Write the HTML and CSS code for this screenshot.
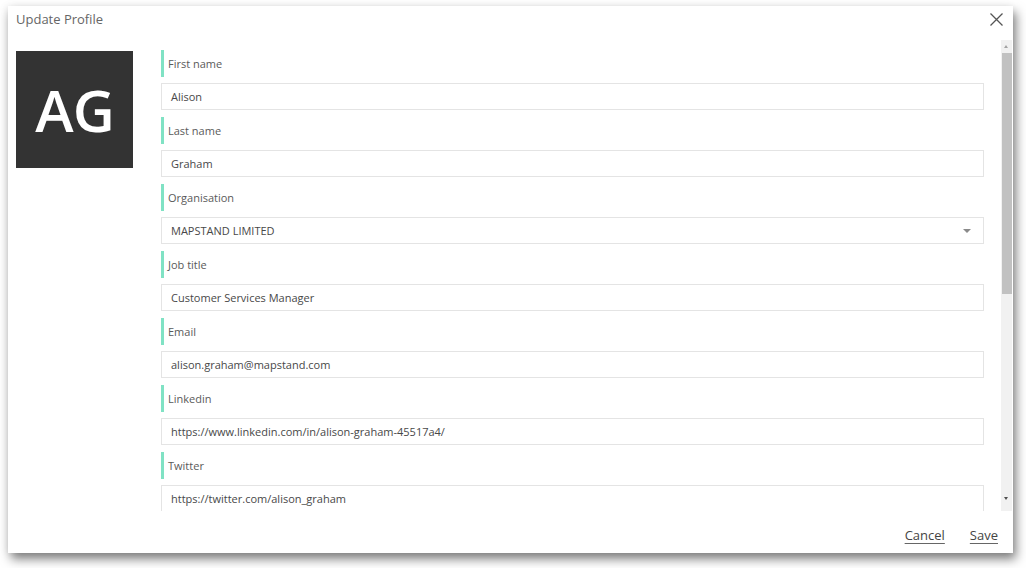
FILE: index.html
```html
<!DOCTYPE html>
<html lang="en">
<head>
<meta charset="utf-8">
<title>Update Profile</title>
<link rel="stylesheet" href="styles.css">
</head>
<body>
<div class="dialog">
  <header class="dialog-header">
    <h1 class="dialog-title">Update Profile</h1>
    <button class="close-btn" aria-label="Close">
      <svg width="13" height="13" viewBox="0 0 13 13"><path d="M0.5 0.5 L12.5 12.5 M12.5 0.5 L0.5 12.5" stroke="#555" stroke-width="1.3" fill="none"/></svg>
    </button>
  </header>
  <div class="dialog-body">
    <div class="scroll-content">
      <div class="avatar">AG</div>
      <form class="form">
        <div class="field">
          <label class="field-label">First name</label>
          <div class="field-input">Alison</div>
        </div>
        <div class="field">
          <label class="field-label">Last name</label>
          <div class="field-input">Graham</div>
        </div>
        <div class="field">
          <label class="field-label">Organisation</label>
          <div class="field-input select">MAPSTAND LIMITED<span class="caret"></span></div>
        </div>
        <div class="field">
          <label class="field-label">Job title</label>
          <div class="field-input">Customer Services Manager</div>
        </div>
        <div class="field">
          <label class="field-label">Email</label>
          <div class="field-input">alison.graham@mapstand.com</div>
        </div>
        <div class="field">
          <label class="field-label">Linkedin</label>
          <div class="field-input">https://www.linkedin.com/in/alison-graham-45517a4/</div>
        </div>
        <div class="field">
          <label class="field-label">Twitter</label>
          <div class="field-input">https://twitter.com/alison_graham</div>
        </div>
      </form>
    </div>
    <div class="scrollbar">
      <span class="sb-arrow up"></span>
      <div class="sb-track"><div class="sb-thumb"></div></div>
      <span class="sb-arrow down"></span>
    </div>
  </div>
  <footer class="dialog-footer">
    <a class="footer-link">Cancel</a>
    <a class="footer-link">Save</a>
  </footer>
</div>
</body>
</html>
```
FILE: styles.css
```css
* { box-sizing: border-box; }
html, body {
  margin: 0;
  padding: 0;
  background: #ffffff;
  font-family: "Open Sans", "Noto Sans", "DejaVu Sans", sans-serif;
}
body {
  width: 1026px;
  height: 568px;
  overflow: hidden;
  padding: 6px 0 0 8px;
}
.dialog {
  width: 1005px;
  height: 547px;
  background: #fff;
  display: flex;
  flex-direction: column;
  box-shadow: 3px 6px 10px rgba(0, 0, 0, 0.5), -2px 0 8px rgba(0, 0, 0, 0.06);
}
.dialog-header {
  height: 34px;
  flex: none;
  display: flex;
  justify-content: space-between;
  align-items: flex-start;
  padding: 4px 10px 0 8px;
}
.dialog-title {
  margin: 0;
  font-size: 13px;
  line-height: 18px;
  font-weight: normal;
  color: #666;
}
.close-btn {
  border: 0;
  background: none;
  padding: 0;
  margin-top: 3px;
  width: 13px;
  height: 13px;
  display: block;
}
.close-btn svg { display: block; }
.dialog-body {
  height: 471px;
  flex: none;
  display: flex;
  overflow: hidden;
}
.scroll-content {
  flex: 1;
  display: flex;
  gap: 28px;
  padding: 10px 17px 0 8px;
  overflow: hidden;
}
.avatar {
  flex: none;
  width: 117px;
  height: 117px;
  margin-top: 1px;
  background: #333333;
  color: #fff;
  font-size: 58px;
  font-weight: 600;
  line-height: 117px;
  text-align: center;
  letter-spacing: -1px;
}
.form {
  width: 823px;
  flex: none;
  margin: 0;
  display: flex;
  flex-direction: column;
}
.field {
  display: flex;
  flex-direction: column;
  gap: 6px;
  margin-bottom: 7px;
}
.field-label {
  height: 27px;
  border-left: 3px solid #80e2c4;
  padding-left: 4px;
  font-size: 11px;
  line-height: 27px;
  color: #5a5a5a;
}
.field-input {
  height: 27px;
  border: 1px solid #e4e4e4;
  padding: 0 9px;
  font-size: 11px;
  line-height: 25px;
  color: #484848;
  position: relative;
}
.caret {
  position: absolute;
  right: 12px;
  top: 11px;
  width: 0;
  height: 0;
  border-left: 4px solid transparent;
  border-right: 4px solid transparent;
  border-top: 4px solid #8a8a8a;
}
.scrollbar {
  flex: none;
  width: 11px;
  margin-right: 1px;
  background: #f1f1f1;
  display: flex;
  flex-direction: column;
  align-items: center;
}
.sb-arrow {
  flex: none;
  height: 13px;
  width: 11px;
  position: relative;
}
.sb-arrow::after {
  content: "";
  position: absolute;
  left: 3px;
  width: 0;
  height: 0;
  border-left: 2.5px solid transparent;
  border-right: 2.5px solid transparent;
}
.sb-arrow.up::after { top: 5px; border-bottom: 3px solid #a3a3a3; }
.sb-arrow.down::after { top: 4px; border-top: 3px solid #505050; }
.sb-arrow.down { height: 18px; }
.sb-track {
  flex: 1;
  width: 11px;
}
.sb-thumb {
  width: 10px;
  margin-left: 1px;
  height: 241px;
  background: #c1c1c1;
}
.dialog-footer {
  flex: 1;
  display: flex;
  justify-content: flex-end;
  align-items: flex-start;
  gap: 25px;
  padding: 16px 15px 0 0;
}
.footer-link {
  font-size: 13px;
  line-height: 17px;
  color: #444;
  text-decoration: underline;
  text-underline-offset: 3px;
  text-decoration-color: #666;
  cursor: pointer;
}
```
